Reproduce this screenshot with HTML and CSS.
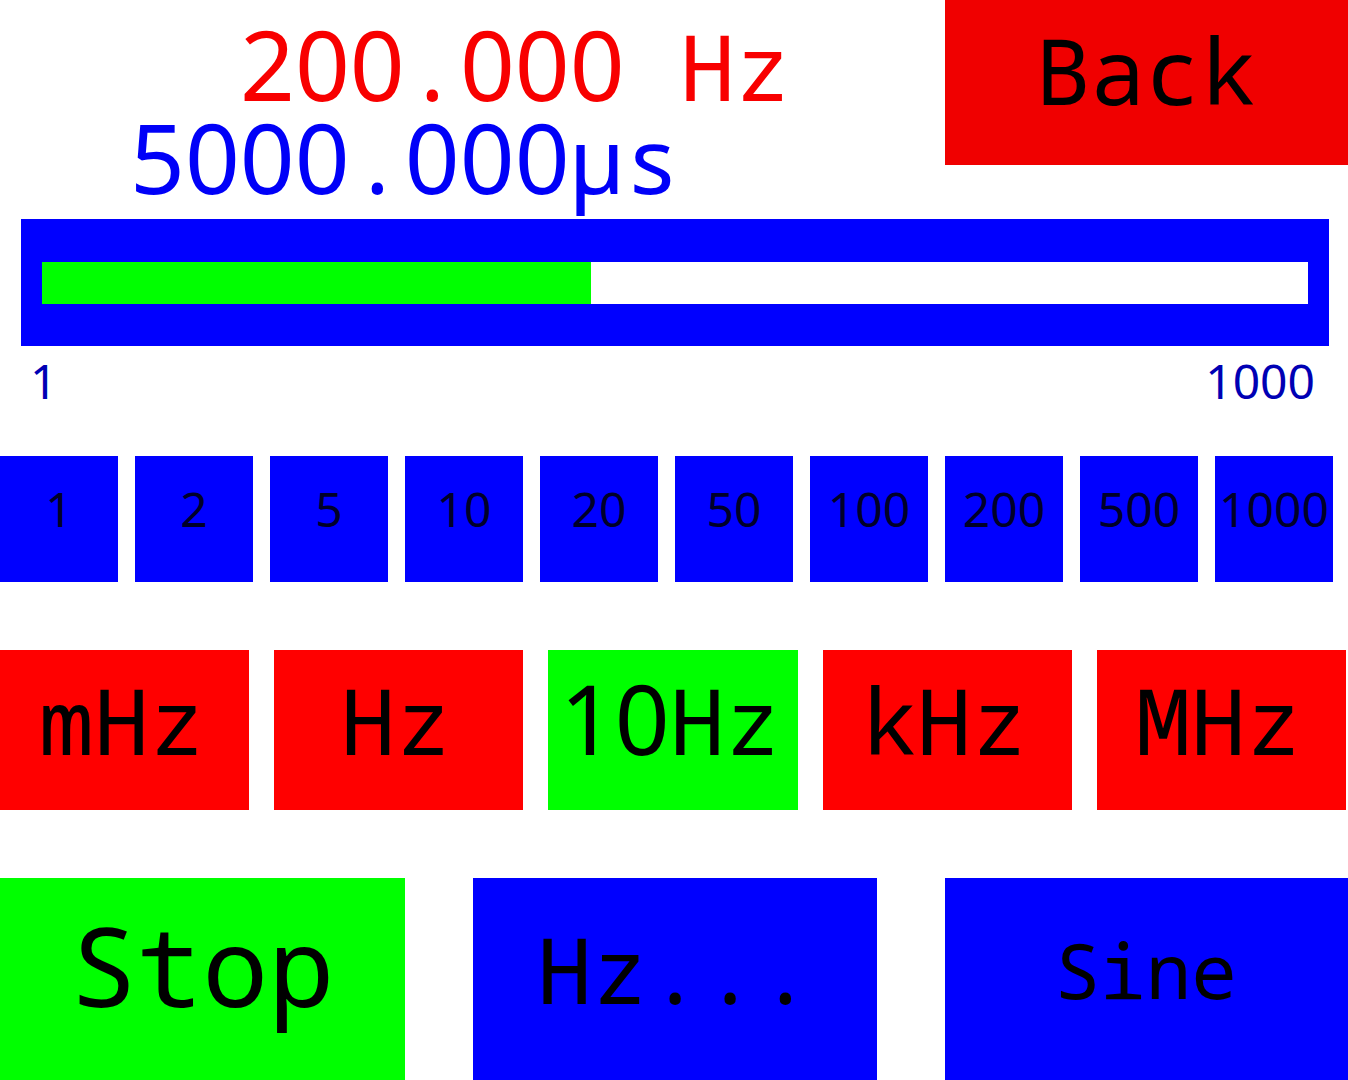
FILE: index.html
```html
<!DOCTYPE html>
<html lang="en">
<head>
<meta charset="utf-8">
<meta name="viewport" content="width=device-width, initial-scale=1">
<title>Frequency generator</title>
<link rel="stylesheet" href="styles.css">
</head>
<body>
<main class="panel">
  <header class="top">
    <div class="readout">
      <output class="frequency"><span class="digits">200</span>.<span class="digits">000</span> Hz</output>
      <output class="period"><span class="digits">5000</span>.<span class="digits">000</span>µs</output>
    </div>
    <button class="key key-back" type="button">Back</button>
  </header>
  <section class="slider">
    <input class="slider-input" type="range" min="0" max="1000" value="433" aria-label="Frequency">
    <div class="scale"><span>1</span><span>1000</span></div>
  </section>
  <section class="presets" aria-label="Presets">
    <button class="key preset" type="button">1</button>
    <button class="key preset" type="button">2</button>
    <button class="key preset" type="button">5</button>
    <button class="key preset" type="button">10</button>
    <button class="key preset" type="button">20</button>
    <button class="key preset" type="button">50</button>
    <button class="key preset" type="button">100</button>
    <button class="key preset" type="button">200</button>
    <button class="key preset" type="button">500</button>
    <button class="key preset" type="button">1000</button>
  </section>
  <section class="ranges" aria-label="Range">
    <button class="key range" type="button">mHz</button>
    <button class="key range" type="button">Hz</button>
    <button class="key range selected" type="button" aria-pressed="true"><span class="digits">10</span>Hz</button>
    <button class="key range" type="button">kHz</button>
    <button class="key range" type="button">MHz</button>
  </section>
  <section class="actions">
    <button class="key action action-stop" type="button">Stop</button>
    <button class="key action" type="button">Hz...</button>
    <button class="key action action-wave" type="button">Sine</button>
  </section>
</main>
</body>
</html>
```
FILE: styles.css
```css
* {
  box-sizing: border-box;
}

body {
  margin: 0;
  background: #fff;
  color: #000;
  font-family: "Droid Sans Mono", "Noto Sans Mono", "DejaVu Sans Mono", monospace;
  font-size: 92px;
}

.panel {
  display: flex;
  flex-direction: column;
  min-height: 100vh;
  overflow: hidden;
}

/* plain, unslashed numerals */
.digits {
  font-family: "Noto Sans", "Open Sans", sans-serif;
  font-size: 96px;
  line-height: 1px;
}

.key {
  border: 0;
  margin: 0;
  padding: 0 0 20px;
  min-width: 0;
  background: #00f;
  color: #000;
  font: inherit;
  line-height: 1;
  white-space: nowrap;
}

.top {
  display: grid;
  grid-template-columns: 7fr 3fr;
  align-items: start;
  margin-right: -2px;
}

.readout {
  display: flex;
  flex-direction: column;
  padding-top: 19px;
  line-height: 93px;
  white-space: pre;
}

.frequency {
  padding-left: 240px;
  color: #f80000;
}

.period {
  padding-left: 130px;
  color: #0000f8;
}

.key-back {
  height: 165px;
  padding-right: 4px;
  padding-bottom: 26px;
  background: #f00000;
}

.slider {
  margin-top: 14px;
  padding: 0 19px 0 21px;
}

.slider-input {
  display: block;
  width: 100%;
  height: 127px;
  margin: 0;
  padding: 0 21px;
  appearance: none;
  background: #00f;
}

.slider-input::-webkit-slider-runnable-track {
  height: 42px;
  overflow: hidden;
  background: #fff;
}

.slider-input::-webkit-slider-thumb {
  appearance: none;
  width: 1px;
  height: 42px;
  background: #0f0;
  box-shadow: -1000px 0 0 1000px #0f0;
}

.scale {
  display: flex;
  justify-content: space-between;
  padding: 8px 14px 0 9px;
  color: #0000b4;
  font-family: "Noto Sans", "Open Sans", sans-serif;
  font-size: 48px;
  line-height: 54px;
}

.presets {
  display: grid;
  grid-template-columns: repeat(10, 1fr);
  gap: 17px;
  margin-top: 48px;
  padding-right: 15px;
}

.preset {
  height: 126px;
  color: #000028;
  font-family: "Noto Sans", "Open Sans", sans-serif;
  font-size: 48px;
}

.ranges {
  display: grid;
  grid-template-columns: repeat(5, 1fr);
  gap: 25px;
  margin-top: 68px;
  padding-right: 2px;
}

.range {
  height: 160px;
  padding-right: 6px;
  background: #f00;
}

.actions {
  display: grid;
  grid-template-columns: repeat(3, 1fr);
  gap: 68px;
  margin-top: 68px;
  margin-right: -2px;
}

.action {
  height: 202px;
}

.action-stop {
  padding-bottom: 30px;
  background: #0f0;
  font-size: 110px;
}

.selected {
  background: #0f0;
}

.action-wave {
  padding-right: 4px;
  padding-bottom: 18px;
  font-size: 76px;
}
```
